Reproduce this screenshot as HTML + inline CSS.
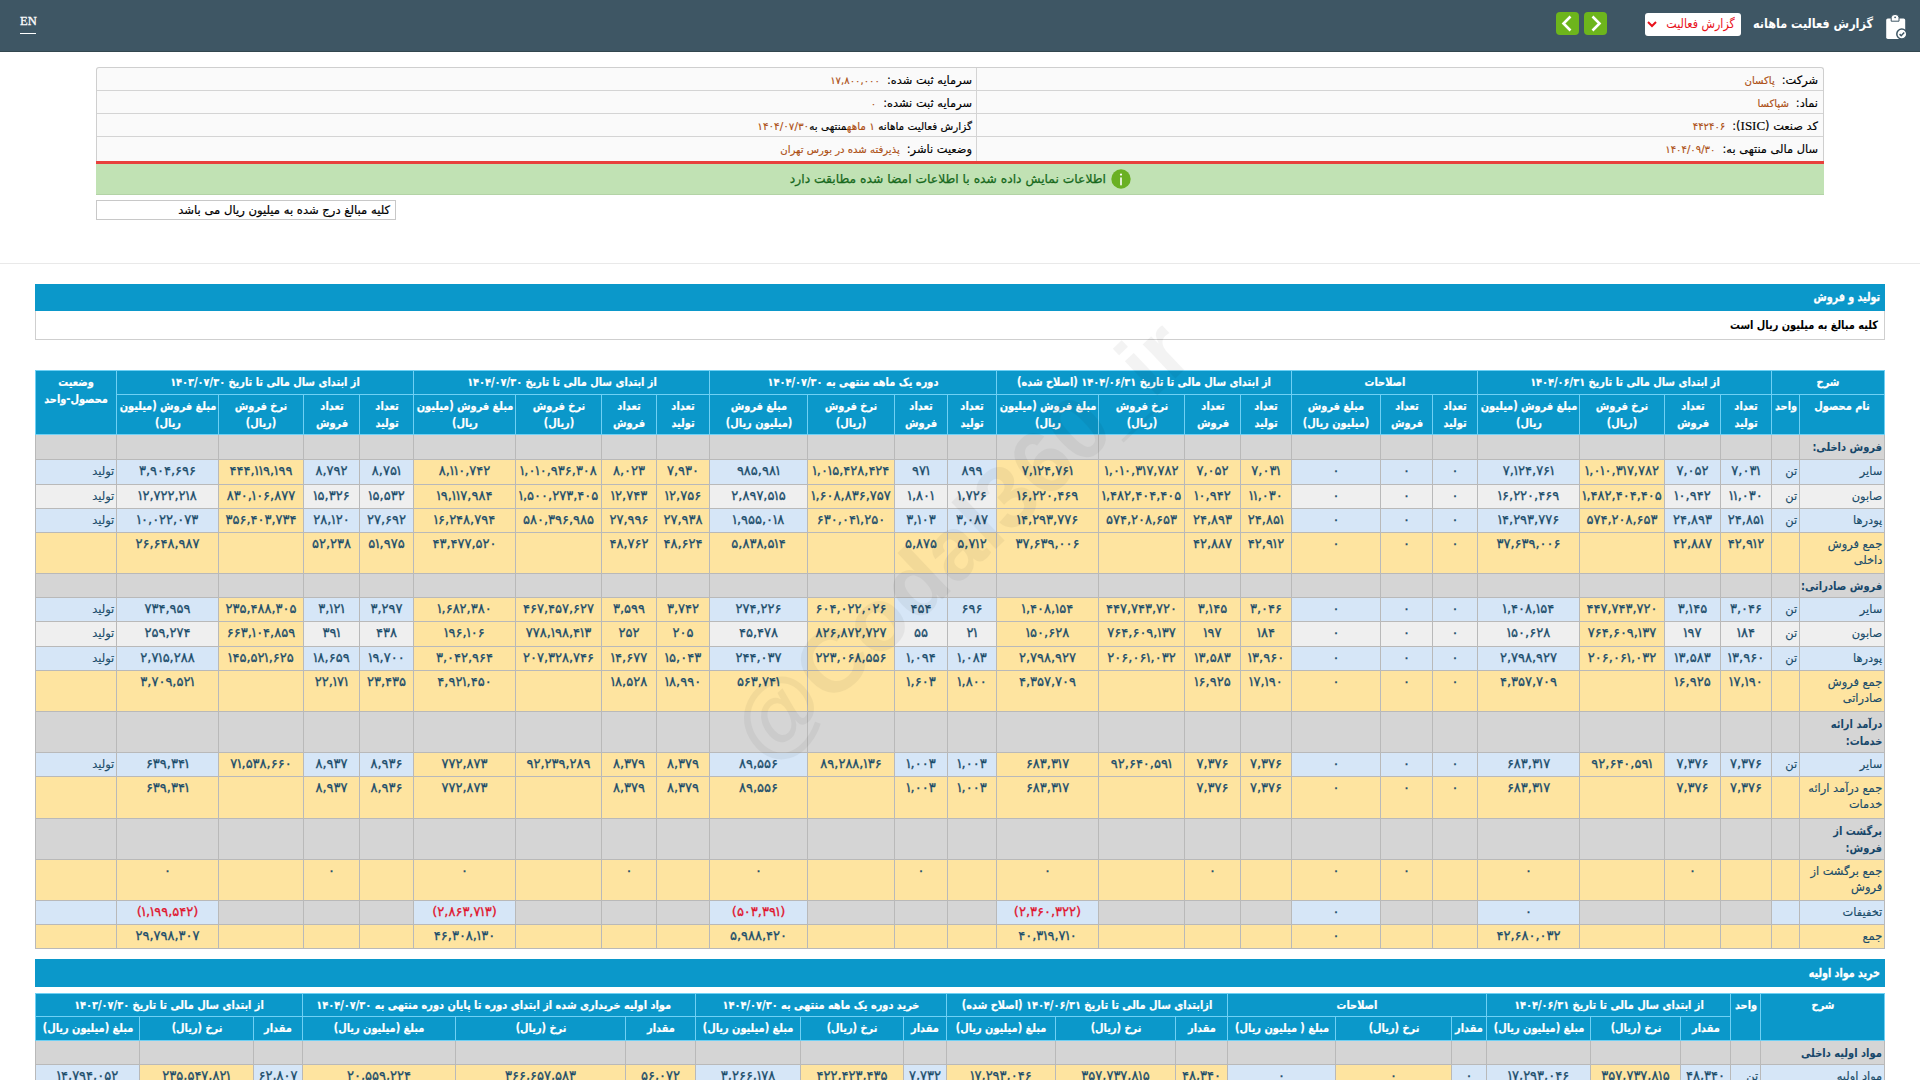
<!DOCTYPE html>
<html lang="fa" dir="rtl"><head><meta charset="utf-8"><title>گزارش فعالیت ماهانه</title>
<style>
*{box-sizing:border-box;margin:0;padding:0}
html,body{width:1920px;height:1080px;overflow:hidden;background:#fff}
body{font-family:"DejaVu Sans", "Liberation Sans", sans-serif;font-size:11.4px;color:#000;position:relative;direction:rtl}
.abs{position:absolute}
#top{position:absolute;left:0;top:0;width:1920px;height:52px;background:#3e5664;border-bottom:1px solid #33474f}
.c{position:absolute;overflow:hidden;white-space:nowrap;color:#1a4c6a}
.c .i{position:absolute;top:2.8px;line-height:16.4px;white-space:nowrap}
.c.h .i{top:3.2px;left:50%;width:400px;margin-left:-200px;text-align:center;color:#fff;font-weight:bold;font-size:11.4px;-webkit-text-stroke:.2px #fff;transform:scaleX(.86);transform-origin:50% 0}
.c.n .i{left:50%;width:400px;margin-left:-200px;text-align:center;font-size:13px;-webkit-text-stroke:.3px currentColor}
.c.n i{font-style:normal;margin:0 -1.4px}
.c.r .i{right:1.8px;text-align:right;font-size:11.4px;-webkit-text-stroke:.15px currentColor}
.c.sb .i{right:1.8px;top:4.4px;text-align:right;font-weight:bold;font-size:11.4px;color:#17476a;transform:scaleX(.87);transform-origin:100% 0}
.c.neg{color:#e0142d}
.bgl{position:absolute}
.bar{position:absolute;left:35px;width:1850px;background:#0b98ca;color:#fff;white-space:nowrap}
.bar .i{position:absolute;right:5px;top:0;font-weight:bold;-webkit-text-stroke:.3px #fff;font-size:11.8px;transform:scaleX(.81);transform-origin:100% 50%;white-space:nowrap}

.il{font-size:11.4px;line-height:22px;white-space:nowrap;color:#000;-webkit-text-stroke:.15px currentColor}
.il .v{color:#ad5015;margin-right:7px;font-size:10.1px}
.il .v0{color:#ad5015;font-size:10.1px}
#wm{position:absolute;left:560px;top:480px;width:800px;height:120px;line-height:120px;text-align:center;font-family:"Liberation Sans",sans-serif;font-weight:bold;font-size:89px;color:#000;opacity:.042;transform:rotate(-43.5deg);direction:ltr;white-space:nowrap;pointer-events:none}
</style></head>
<body>

<div id="top">
  <a class="abs" id="en" style="left:20px;top:12px;width:16px;height:22px;border-bottom:1px solid #fff;color:#fff;font-family:'Liberation Serif',serif;font-size:12.6px;-webkit-text-stroke:.3px #fff;line-height:19px;direction:ltr;text-align:center;white-space:nowrap">EN</a>
  <svg class="abs" style="left:1883px;top:12px" width="28" height="30" viewBox="0 0 28 30">
    <rect x="3.2" y="6.4" width="19" height="20.5" rx="1.6" fill="#fff"/>
    <path d="M8.2 9.2 V5.6 a3.9 3.2 0 0 1 7.8 0 V9.2 Z" fill="#fff" stroke="#3e5664" stroke-width="1"/>
    <circle cx="12.1" cy="5.3" r="0.9" fill="#3e5664"/>
    <circle cx="18.8" cy="22" r="5" fill="#fff" stroke="#3e5664" stroke-width="1.5"/>
    <path d="M16.6 22.1 l1.6 1.6 l3 -3.1" fill="none" stroke="#3e5664" stroke-width="1.5"/>
  </svg>
  <div class="abs" id="title" style="left:1673px;width:200px;top:11px;height:26px;line-height:26px;color:#fff;font-weight:bold;font-size:13px;text-align:right;white-space:nowrap;transform:scaleX(.865);transform-origin:100% 50%">گزارش فعالیت ماهانه</div>
  <div class="abs" id="sel" style="left:1645px;top:13px;width:96px;height:23px;background:#fff;border-radius:3px;color:#e8111a;white-space:nowrap"><div class="abs" style="right:6px;top:0;line-height:22px;font-size:12.6px;transform:scaleX(.88);transform-origin:100% 50%">گزارش فعالیت</div>
    <svg class="abs" style="left:2px;top:8px" width="10" height="7" viewBox="0 0 10 7"><path d="M1 1 L5 5 L9 1" fill="none" stroke="#e8111a" stroke-width="2"/></svg>
  </div>
  <div class="abs" style="left:1584px;top:12px;width:23px;height:23px;background:#6db51c;border-radius:4px">
    <svg width="23" height="23" viewBox="0 0 23 23"><path d="M8.5 4.5 L15.5 11.5 L8.5 18.5" fill="none" stroke="#fff" stroke-width="2.6"/></svg></div>
  <div class="abs" style="left:1556px;top:12px;width:23px;height:23px;background:#6db51c;border-radius:4px">
    <svg width="23" height="23" viewBox="0 0 23 23"><path d="M14.5 4.5 L7.5 11.5 L14.5 18.5" fill="none" stroke="#fff" stroke-width="2.6"/></svg></div>
</div>


<div class="abs" id="info" style="left:96px;top:67px;width:1728px;height:94px;background:#fafafa;border:1px solid #cfcfcf;border-bottom:none;border-radius:3px 3px 0 0"></div>
<div class="abs" style="left:97px;top:90px;width:1726px;height:1px;background:#d4d4d4"></div>
<div class="abs" style="left:97px;top:113px;width:1726px;height:1px;background:#d4d4d4"></div>
<div class="abs" style="left:97px;top:136px;width:1726px;height:1px;background:#d4d4d4"></div>
<div class="abs" style="left:976px;top:68px;width:1px;height:93px;background:#d4d4d4"></div>
<div class="abs" style="left:96px;top:161px;width:1728px;height:3px;background:#e8403c"></div>
<div class="abs" id="green" style="left:96px;top:164px;width:1728px;height:31px;background:#c1e2b4;border-bottom:1px solid #b3d3a6"></div>
<div class="abs il" style="top:69px;right:102px">شرکت:<span class="v">پاکسان</span></div>
<div class="abs il" style="top:92px;right:102px">نماد:<span class="v">شپاکسا</span></div>
<div class="abs il" style="top:115px;right:102px">کد صنعت (<span style="font-family:'Liberation Serif',serif;font-size:13px">ISIC</span>):<span class="v">۴۴۲۴۰۶</span></div>
<div class="abs il" style="top:138px;right:102px">سال مالی منتهی به:<span class="v">۱۴۰۴/۰۹/۳۰</span></div>
<div class="abs il" style="top:69px;right:948px">سرمایه ثبت شده:<span class="v">۱۷,۸۰۰,۰۰۰</span></div>
<div class="abs il" style="top:92px;right:948px">سرمایه ثبت نشده:<span class="v">۰</span></div>
<div class="abs il" style="top:115px;right:948px;font-size:10.45px">گزارش فعالیت ماهانه<span class="v0" style="font-size:10.45px"> ۱ ماهه</span>منتهی به<span class="v0" style="font-size:10.45px">۱۴۰۴/۰۷/۳۰</span></div>
<div class="abs il" style="top:138px;right:948px">وضعیت ناشر:<span class="v">پذیرفته شده در بورس تهران</span></div>
<div class="abs" id="gmsg" style="top:164px;right:814px;height:30px;line-height:30px;color:#17691c;font-size:12.3px;-webkit-text-stroke:.25px currentColor;white-space:nowrap">اطلاعات نمایش داده شده با اطلاعات امضا شده مطابقت دارد</div>
<svg class="abs" style="left:1111px;top:169px" width="20" height="20" viewBox="0 0 20 20"><circle cx="10" cy="10" r="9.7" fill="#6ab023"/><rect x="9.2" y="8.2" width="1.6" height="8.4" rx="0.8" fill="#fff"/><circle cx="10" cy="5.6" r="1.1" fill="#fff"/></svg>
<div class="abs" id="note" style="left:96px;top:200px;width:300px;height:20px;border:1px solid #c8c8c8;background:#fff;font-size:11.6px;line-height:19.4px;-webkit-text-stroke:.2px #000;text-align:right;padding-right:5px;white-space:nowrap">کلیه مبالغ درج شده به میلیون ریال می باشد</div>
<div class="abs" style="left:0;top:263px;width:1920px;height:1px;background:#e9e9e9"></div>
<div class="bar" style="top:284px;height:27px;line-height:27px"><div class="i">تولید و فروش</div></div>
<div class="abs" id="sub" style="left:35px;top:311px;width:1850px;height:29px;border:1px solid #cfcfcf;border-top:none;background:#fff;white-space:nowrap"><div class="abs" style="right:6px;top:0;line-height:29px;font-weight:bold;font-size:11.4px;transform:scaleX(.86);transform-origin:100% 50%">کلیه مبالغ به میلیون ریال است</div></div>
<div class="bar" style="top:959px;height:28px;line-height:28px"><div class="i">خرید مواد اولیه</div></div>

<div class="tbl" id="sales">
<div class="bgl" style="left:35px;top:370px;width:1850px;height:65px;background:#6fd0f4"></div>
<div class="bgl" style="left:35px;top:435px;width:1850px;height:514px;background:#b9b9b9"></div>
<div class="c h" style="left:1772px;top:371px;width:112px;height:23px;background:#0b98ca;"><div class="i">شرح</div></div>
<div class="c h" style="left:1478px;top:371px;width:293px;height:23px;background:#0b98ca;"><div class="i">از ابتدای سال مالی تا تاریخ ۱۴۰۴/۰۶/۳۱</div></div>
<div class="c h" style="left:1292px;top:371px;width:185px;height:23px;background:#0b98ca;"><div class="i">اصلاحات</div></div>
<div class="c h" style="left:997px;top:371px;width:294px;height:23px;background:#0b98ca;"><div class="i">از ابتدای سال مالی تا تاریخ ۱۴۰۴/۰۶/۳۱ (اصلاح شده)</div></div>
<div class="c h" style="left:710px;top:371px;width:286px;height:23px;background:#0b98ca;"><div class="i">دوره یک ماهه منتهی به ۱۴۰۴/۰۷/۳۰</div></div>
<div class="c h" style="left:414px;top:371px;width:295px;height:23px;background:#0b98ca;"><div class="i">از ابتدای سال مالی تا تاریخ ۱۴۰۴/۰۷/۳۰</div></div>
<div class="c h" style="left:117px;top:371px;width:296px;height:23px;background:#0b98ca;"><div class="i">از ابتدای سال مالی تا تاریخ ۱۴۰۳/۰۷/۳۰</div></div>
<div class="c h" style="left:36px;top:371px;width:80px;height:63px;background:#0b98ca;"><div class="i">وضعیت<br>محصول-واحد</div></div>
<div class="c h" style="left:1800px;top:395px;width:84px;height:39px;background:#0b98ca;"><div class="i">نام محصول</div></div>
<div class="c h" style="left:1772px;top:395px;width:27px;height:39px;background:#0b98ca;"><div class="i">واحد</div></div>
<div class="c h" style="left:1721px;top:395px;width:50px;height:39px;background:#0b98ca;"><div class="i">تعداد<br>تولید</div></div>
<div class="c h" style="left:1665px;top:395px;width:55px;height:39px;background:#0b98ca;"><div class="i">تعداد<br>فروش</div></div>
<div class="c h" style="left:1580px;top:395px;width:84px;height:39px;background:#0b98ca;"><div class="i">نرخ فروش<br>(ریال)</div></div>
<div class="c h" style="left:1478px;top:395px;width:101px;height:39px;background:#0b98ca;"><div class="i">مبلغ فروش (میلیون<br>ریال)</div></div>
<div class="c h" style="left:1433px;top:395px;width:44px;height:39px;background:#0b98ca;"><div class="i">تعداد<br>تولید</div></div>
<div class="c h" style="left:1381px;top:395px;width:51px;height:39px;background:#0b98ca;"><div class="i">تعداد<br>فروش</div></div>
<div class="c h" style="left:1292px;top:395px;width:88px;height:39px;background:#0b98ca;"><div class="i">مبلغ فروش<br>(میلیون ریال)</div></div>
<div class="c h" style="left:1241px;top:395px;width:50px;height:39px;background:#0b98ca;"><div class="i">تعداد<br>تولید</div></div>
<div class="c h" style="left:1185px;top:395px;width:55px;height:39px;background:#0b98ca;"><div class="i">تعداد<br>فروش</div></div>
<div class="c h" style="left:1099px;top:395px;width:85px;height:39px;background:#0b98ca;"><div class="i">نرخ فروش<br>(ریال)</div></div>
<div class="c h" style="left:997px;top:395px;width:101px;height:39px;background:#0b98ca;"><div class="i">مبلغ فروش (میلیون<br>ریال)</div></div>
<div class="c h" style="left:948px;top:395px;width:48px;height:39px;background:#0b98ca;"><div class="i">تعداد<br>تولید</div></div>
<div class="c h" style="left:895px;top:395px;width:52px;height:39px;background:#0b98ca;"><div class="i">تعداد<br>فروش</div></div>
<div class="c h" style="left:808px;top:395px;width:86px;height:39px;background:#0b98ca;"><div class="i">نرخ فروش<br>(ریال)</div></div>
<div class="c h" style="left:710px;top:395px;width:97px;height:39px;background:#0b98ca;"><div class="i">مبلغ فروش<br>(میلیون ریال)</div></div>
<div class="c h" style="left:657px;top:395px;width:52px;height:39px;background:#0b98ca;"><div class="i">تعداد<br>تولید</div></div>
<div class="c h" style="left:602px;top:395px;width:54px;height:39px;background:#0b98ca;"><div class="i">تعداد<br>فروش</div></div>
<div class="c h" style="left:516px;top:395px;width:85px;height:39px;background:#0b98ca;"><div class="i">نرخ فروش<br>(ریال)</div></div>
<div class="c h" style="left:414px;top:395px;width:101px;height:39px;background:#0b98ca;"><div class="i">مبلغ فروش (میلیون<br>ریال)</div></div>
<div class="c h" style="left:360px;top:395px;width:53px;height:39px;background:#0b98ca;"><div class="i">تعداد<br>تولید</div></div>
<div class="c h" style="left:304px;top:395px;width:55px;height:39px;background:#0b98ca;"><div class="i">تعداد<br>فروش</div></div>
<div class="c h" style="left:219px;top:395px;width:84px;height:39px;background:#0b98ca;"><div class="i">نرخ فروش<br>(ریال)</div></div>
<div class="c h" style="left:117px;top:395px;width:101px;height:39px;background:#0b98ca;"><div class="i">مبلغ فروش (میلیون<br>ریال)</div></div>
<div class="c sb" style="left:1800px;top:435px;width:84px;height:24px;background:#d5d5d5;"><div class="i">فروش داخلی:</div></div>
<div class="c " style="left:1772px;top:435px;width:27px;height:24px;background:#d5d5d5;"></div>
<div class="c " style="left:1721px;top:435px;width:50px;height:24px;background:#d5d5d5;"></div>
<div class="c " style="left:1665px;top:435px;width:55px;height:24px;background:#d5d5d5;"></div>
<div class="c " style="left:1580px;top:435px;width:84px;height:24px;background:#d5d5d5;"></div>
<div class="c " style="left:1478px;top:435px;width:101px;height:24px;background:#d5d5d5;"></div>
<div class="c " style="left:1433px;top:435px;width:44px;height:24px;background:#d5d5d5;"></div>
<div class="c " style="left:1381px;top:435px;width:51px;height:24px;background:#d5d5d5;"></div>
<div class="c " style="left:1292px;top:435px;width:88px;height:24px;background:#d5d5d5;"></div>
<div class="c " style="left:1241px;top:435px;width:50px;height:24px;background:#d5d5d5;"></div>
<div class="c " style="left:1185px;top:435px;width:55px;height:24px;background:#d5d5d5;"></div>
<div class="c " style="left:1099px;top:435px;width:85px;height:24px;background:#d5d5d5;"></div>
<div class="c " style="left:997px;top:435px;width:101px;height:24px;background:#d5d5d5;"></div>
<div class="c " style="left:948px;top:435px;width:48px;height:24px;background:#d5d5d5;"></div>
<div class="c " style="left:895px;top:435px;width:52px;height:24px;background:#d5d5d5;"></div>
<div class="c " style="left:808px;top:435px;width:86px;height:24px;background:#d5d5d5;"></div>
<div class="c " style="left:710px;top:435px;width:97px;height:24px;background:#d5d5d5;"></div>
<div class="c " style="left:657px;top:435px;width:52px;height:24px;background:#d5d5d5;"></div>
<div class="c " style="left:602px;top:435px;width:54px;height:24px;background:#d5d5d5;"></div>
<div class="c " style="left:516px;top:435px;width:85px;height:24px;background:#d5d5d5;"></div>
<div class="c " style="left:414px;top:435px;width:101px;height:24px;background:#d5d5d5;"></div>
<div class="c " style="left:360px;top:435px;width:53px;height:24px;background:#d5d5d5;"></div>
<div class="c " style="left:304px;top:435px;width:55px;height:24px;background:#d5d5d5;"></div>
<div class="c " style="left:219px;top:435px;width:84px;height:24px;background:#d5d5d5;"></div>
<div class="c " style="left:117px;top:435px;width:101px;height:24px;background:#d5d5d5;"></div>
<div class="c " style="left:36px;top:435px;width:80px;height:24px;background:#d5d5d5;"></div>
<div class="c r" style="left:1800px;top:460px;width:84px;height:24px;background:#d6e6f7;"><div class="i">سایر</div></div>
<div class="c r" style="left:1772px;top:460px;width:27px;height:24px;background:#d6e6f7;"><div class="i">تن</div></div>
<div class="c n" style="left:1721px;top:460px;width:50px;height:24px;background:#d6e6f7;"><div class="i">۷,۰۳<i>۱</i></div></div>
<div class="c n" style="left:1665px;top:460px;width:55px;height:24px;background:#d6e6f7;"><div class="i">۷,۰۵۲</div></div>
<div class="c n" style="left:1580px;top:460px;width:84px;height:24px;background:#fee4a0;"><div class="i"><i>۱</i>,۰<i>۱</i>۰,۳<i>۱</i>۷,۷۸۲</div></div>
<div class="c n" style="left:1478px;top:460px;width:101px;height:24px;background:#d6e6f7;"><div class="i">۷,<i>۱</i>۲۴,۷۶<i>۱</i></div></div>
<div class="c n" style="left:1433px;top:460px;width:44px;height:24px;background:#d6e6f7;"><div class="i">۰</div></div>
<div class="c n" style="left:1381px;top:460px;width:51px;height:24px;background:#d6e6f7;"><div class="i">۰</div></div>
<div class="c n" style="left:1292px;top:460px;width:88px;height:24px;background:#d6e6f7;"><div class="i">۰</div></div>
<div class="c n" style="left:1241px;top:460px;width:50px;height:24px;background:#fee4a0;"><div class="i">۷,۰۳<i>۱</i></div></div>
<div class="c n" style="left:1185px;top:460px;width:55px;height:24px;background:#fee4a0;"><div class="i">۷,۰۵۲</div></div>
<div class="c n" style="left:1099px;top:460px;width:85px;height:24px;background:#fee4a0;"><div class="i"><i>۱</i>,۰<i>۱</i>۰,۳<i>۱</i>۷,۷۸۲</div></div>
<div class="c n" style="left:997px;top:460px;width:101px;height:24px;background:#fee4a0;"><div class="i">۷,<i>۱</i>۲۴,۷۶<i>۱</i></div></div>
<div class="c n" style="left:948px;top:460px;width:48px;height:24px;background:#d6e6f7;"><div class="i">۸۹۹</div></div>
<div class="c n" style="left:895px;top:460px;width:52px;height:24px;background:#d6e6f7;"><div class="i">۹۷<i>۱</i></div></div>
<div class="c n" style="left:808px;top:460px;width:86px;height:24px;background:#fee4a0;"><div class="i"><i>۱</i>,۰<i>۱</i>۵,۴۲۸,۴۲۴</div></div>
<div class="c n" style="left:710px;top:460px;width:97px;height:24px;background:#d6e6f7;"><div class="i">۹۸۵,۹۸<i>۱</i></div></div>
<div class="c n" style="left:657px;top:460px;width:52px;height:24px;background:#fee4a0;"><div class="i">۷,۹۳۰</div></div>
<div class="c n" style="left:602px;top:460px;width:54px;height:24px;background:#fee4a0;"><div class="i">۸,۰۲۳</div></div>
<div class="c n" style="left:516px;top:460px;width:85px;height:24px;background:#fee4a0;"><div class="i"><i>۱</i>,۰<i>۱</i>۰,۹۳۶,۳۰۸</div></div>
<div class="c n" style="left:414px;top:460px;width:101px;height:24px;background:#fee4a0;"><div class="i">۸,<i>۱</i><i>۱</i>۰,۷۴۲</div></div>
<div class="c n" style="left:360px;top:460px;width:53px;height:24px;background:#d6e6f7;"><div class="i">۸,۷۵<i>۱</i></div></div>
<div class="c n" style="left:304px;top:460px;width:55px;height:24px;background:#d6e6f7;"><div class="i">۸,۷۹۲</div></div>
<div class="c n" style="left:219px;top:460px;width:84px;height:24px;background:#fee4a0;"><div class="i">۴۴۴,<i>۱</i><i>۱</i>۹,<i>۱</i>۹۹</div></div>
<div class="c n" style="left:117px;top:460px;width:101px;height:24px;background:#d6e6f7;"><div class="i">۳,۹۰۴,۶۹۶</div></div>
<div class="c r" style="left:36px;top:460px;width:80px;height:24px;background:#d6e6f7;"><div class="i">تولید</div></div>
<div class="c r" style="left:1800px;top:485px;width:84px;height:23px;background:#efefef;"><div class="i">صابون</div></div>
<div class="c r" style="left:1772px;top:485px;width:27px;height:23px;background:#efefef;"><div class="i">تن</div></div>
<div class="c n" style="left:1721px;top:485px;width:50px;height:23px;background:#efefef;"><div class="i"><i>۱</i><i>۱</i>,۰۳۰</div></div>
<div class="c n" style="left:1665px;top:485px;width:55px;height:23px;background:#efefef;"><div class="i"><i>۱</i>۰,۹۴۲</div></div>
<div class="c n" style="left:1580px;top:485px;width:84px;height:23px;background:#fee4a0;"><div class="i"><i>۱</i>,۴۸۲,۴۰۴,۴۰۵</div></div>
<div class="c n" style="left:1478px;top:485px;width:101px;height:23px;background:#efefef;"><div class="i"><i>۱</i>۶,۲۲۰,۴۶۹</div></div>
<div class="c n" style="left:1433px;top:485px;width:44px;height:23px;background:#efefef;"><div class="i">۰</div></div>
<div class="c n" style="left:1381px;top:485px;width:51px;height:23px;background:#efefef;"><div class="i">۰</div></div>
<div class="c n" style="left:1292px;top:485px;width:88px;height:23px;background:#efefef;"><div class="i">۰</div></div>
<div class="c n" style="left:1241px;top:485px;width:50px;height:23px;background:#fee4a0;"><div class="i"><i>۱</i><i>۱</i>,۰۳۰</div></div>
<div class="c n" style="left:1185px;top:485px;width:55px;height:23px;background:#fee4a0;"><div class="i"><i>۱</i>۰,۹۴۲</div></div>
<div class="c n" style="left:1099px;top:485px;width:85px;height:23px;background:#fee4a0;"><div class="i"><i>۱</i>,۴۸۲,۴۰۴,۴۰۵</div></div>
<div class="c n" style="left:997px;top:485px;width:101px;height:23px;background:#fee4a0;"><div class="i"><i>۱</i>۶,۲۲۰,۴۶۹</div></div>
<div class="c n" style="left:948px;top:485px;width:48px;height:23px;background:#efefef;"><div class="i"><i>۱</i>,۷۲۶</div></div>
<div class="c n" style="left:895px;top:485px;width:52px;height:23px;background:#efefef;"><div class="i"><i>۱</i>,۸۰<i>۱</i></div></div>
<div class="c n" style="left:808px;top:485px;width:86px;height:23px;background:#fee4a0;"><div class="i"><i>۱</i>,۶۰۸,۸۳۶,۷۵۷</div></div>
<div class="c n" style="left:710px;top:485px;width:97px;height:23px;background:#efefef;"><div class="i">۲,۸۹۷,۵<i>۱</i>۵</div></div>
<div class="c n" style="left:657px;top:485px;width:52px;height:23px;background:#fee4a0;"><div class="i"><i>۱</i>۲,۷۵۶</div></div>
<div class="c n" style="left:602px;top:485px;width:54px;height:23px;background:#fee4a0;"><div class="i"><i>۱</i>۲,۷۴۳</div></div>
<div class="c n" style="left:516px;top:485px;width:85px;height:23px;background:#fee4a0;"><div class="i"><i>۱</i>,۵۰۰,۲۷۳,۴۰۵</div></div>
<div class="c n" style="left:414px;top:485px;width:101px;height:23px;background:#fee4a0;"><div class="i"><i>۱</i>۹,<i>۱</i><i>۱</i>۷,۹۸۴</div></div>
<div class="c n" style="left:360px;top:485px;width:53px;height:23px;background:#efefef;"><div class="i"><i>۱</i>۵,۵۳۲</div></div>
<div class="c n" style="left:304px;top:485px;width:55px;height:23px;background:#efefef;"><div class="i"><i>۱</i>۵,۳۲۶</div></div>
<div class="c n" style="left:219px;top:485px;width:84px;height:23px;background:#fee4a0;"><div class="i">۸۳۰,<i>۱</i>۰۶,۸۷۷</div></div>
<div class="c n" style="left:117px;top:485px;width:101px;height:23px;background:#efefef;"><div class="i"><i>۱</i>۲,۷۲۲,۲<i>۱</i>۸</div></div>
<div class="c r" style="left:36px;top:485px;width:80px;height:23px;background:#efefef;"><div class="i">تولید</div></div>
<div class="c r" style="left:1800px;top:509px;width:84px;height:23px;background:#d6e6f7;"><div class="i">پودرها</div></div>
<div class="c r" style="left:1772px;top:509px;width:27px;height:23px;background:#d6e6f7;"><div class="i">تن</div></div>
<div class="c n" style="left:1721px;top:509px;width:50px;height:23px;background:#d6e6f7;"><div class="i">۲۴,۸۵<i>۱</i></div></div>
<div class="c n" style="left:1665px;top:509px;width:55px;height:23px;background:#d6e6f7;"><div class="i">۲۴,۸۹۳</div></div>
<div class="c n" style="left:1580px;top:509px;width:84px;height:23px;background:#fee4a0;"><div class="i">۵۷۴,۲۰۸,۶۵۳</div></div>
<div class="c n" style="left:1478px;top:509px;width:101px;height:23px;background:#d6e6f7;"><div class="i"><i>۱</i>۴,۲۹۳,۷۷۶</div></div>
<div class="c n" style="left:1433px;top:509px;width:44px;height:23px;background:#d6e6f7;"><div class="i">۰</div></div>
<div class="c n" style="left:1381px;top:509px;width:51px;height:23px;background:#d6e6f7;"><div class="i">۰</div></div>
<div class="c n" style="left:1292px;top:509px;width:88px;height:23px;background:#d6e6f7;"><div class="i">۰</div></div>
<div class="c n" style="left:1241px;top:509px;width:50px;height:23px;background:#fee4a0;"><div class="i">۲۴,۸۵<i>۱</i></div></div>
<div class="c n" style="left:1185px;top:509px;width:55px;height:23px;background:#fee4a0;"><div class="i">۲۴,۸۹۳</div></div>
<div class="c n" style="left:1099px;top:509px;width:85px;height:23px;background:#fee4a0;"><div class="i">۵۷۴,۲۰۸,۶۵۳</div></div>
<div class="c n" style="left:997px;top:509px;width:101px;height:23px;background:#fee4a0;"><div class="i"><i>۱</i>۴,۲۹۳,۷۷۶</div></div>
<div class="c n" style="left:948px;top:509px;width:48px;height:23px;background:#d6e6f7;"><div class="i">۳,۰۸۷</div></div>
<div class="c n" style="left:895px;top:509px;width:52px;height:23px;background:#d6e6f7;"><div class="i">۳,<i>۱</i>۰۳</div></div>
<div class="c n" style="left:808px;top:509px;width:86px;height:23px;background:#fee4a0;"><div class="i">۶۳۰,۰۴<i>۱</i>,۲۵۰</div></div>
<div class="c n" style="left:710px;top:509px;width:97px;height:23px;background:#d6e6f7;"><div class="i"><i>۱</i>,۹۵۵,۰<i>۱</i>۸</div></div>
<div class="c n" style="left:657px;top:509px;width:52px;height:23px;background:#fee4a0;"><div class="i">۲۷,۹۳۸</div></div>
<div class="c n" style="left:602px;top:509px;width:54px;height:23px;background:#fee4a0;"><div class="i">۲۷,۹۹۶</div></div>
<div class="c n" style="left:516px;top:509px;width:85px;height:23px;background:#fee4a0;"><div class="i">۵۸۰,۳۹۶,۹۸۵</div></div>
<div class="c n" style="left:414px;top:509px;width:101px;height:23px;background:#fee4a0;"><div class="i"><i>۱</i>۶,۲۴۸,۷۹۴</div></div>
<div class="c n" style="left:360px;top:509px;width:53px;height:23px;background:#d6e6f7;"><div class="i">۲۷,۶۹۲</div></div>
<div class="c n" style="left:304px;top:509px;width:55px;height:23px;background:#d6e6f7;"><div class="i">۲۸,<i>۱</i>۲۰</div></div>
<div class="c n" style="left:219px;top:509px;width:84px;height:23px;background:#fee4a0;"><div class="i">۳۵۶,۴۰۳,۷۳۴</div></div>
<div class="c n" style="left:117px;top:509px;width:101px;height:23px;background:#d6e6f7;"><div class="i"><i>۱</i>۰,۰۲۲,۰۷۳</div></div>
<div class="c r" style="left:36px;top:509px;width:80px;height:23px;background:#d6e6f7;"><div class="i">تولید</div></div>
<div class="c r" style="left:1800px;top:533px;width:84px;height:40px;background:#fee4a0;"><div class="i">جمع فروش<br>داخلی</div></div>
<div class="c r" style="left:1772px;top:533px;width:27px;height:40px;background:#fee4a0;"></div>
<div class="c n" style="left:1721px;top:533px;width:50px;height:40px;background:#fee4a0;"><div class="i">۴۲,۹<i>۱</i>۲</div></div>
<div class="c n" style="left:1665px;top:533px;width:55px;height:40px;background:#fee4a0;"><div class="i">۴۲,۸۸۷</div></div>
<div class="c n" style="left:1580px;top:533px;width:84px;height:40px;background:#fee4a0;"></div>
<div class="c n" style="left:1478px;top:533px;width:101px;height:40px;background:#fee4a0;"><div class="i">۳۷,۶۳۹,۰۰۶</div></div>
<div class="c n" style="left:1433px;top:533px;width:44px;height:40px;background:#fee4a0;"><div class="i">۰</div></div>
<div class="c n" style="left:1381px;top:533px;width:51px;height:40px;background:#fee4a0;"><div class="i">۰</div></div>
<div class="c n" style="left:1292px;top:533px;width:88px;height:40px;background:#fee4a0;"><div class="i">۰</div></div>
<div class="c n" style="left:1241px;top:533px;width:50px;height:40px;background:#fee4a0;"><div class="i">۴۲,۹<i>۱</i>۲</div></div>
<div class="c n" style="left:1185px;top:533px;width:55px;height:40px;background:#fee4a0;"><div class="i">۴۲,۸۸۷</div></div>
<div class="c n" style="left:1099px;top:533px;width:85px;height:40px;background:#fee4a0;"></div>
<div class="c n" style="left:997px;top:533px;width:101px;height:40px;background:#fee4a0;"><div class="i">۳۷,۶۳۹,۰۰۶</div></div>
<div class="c n" style="left:948px;top:533px;width:48px;height:40px;background:#fee4a0;"><div class="i">۵,۷<i>۱</i>۲</div></div>
<div class="c n" style="left:895px;top:533px;width:52px;height:40px;background:#fee4a0;"><div class="i">۵,۸۷۵</div></div>
<div class="c n" style="left:808px;top:533px;width:86px;height:40px;background:#fee4a0;"></div>
<div class="c n" style="left:710px;top:533px;width:97px;height:40px;background:#fee4a0;"><div class="i">۵,۸۳۸,۵<i>۱</i>۴</div></div>
<div class="c n" style="left:657px;top:533px;width:52px;height:40px;background:#fee4a0;"><div class="i">۴۸,۶۲۴</div></div>
<div class="c n" style="left:602px;top:533px;width:54px;height:40px;background:#fee4a0;"><div class="i">۴۸,۷۶۲</div></div>
<div class="c n" style="left:516px;top:533px;width:85px;height:40px;background:#fee4a0;"></div>
<div class="c n" style="left:414px;top:533px;width:101px;height:40px;background:#fee4a0;"><div class="i">۴۳,۴۷۷,۵۲۰</div></div>
<div class="c n" style="left:360px;top:533px;width:53px;height:40px;background:#fee4a0;"><div class="i">۵<i>۱</i>,۹۷۵</div></div>
<div class="c n" style="left:304px;top:533px;width:55px;height:40px;background:#fee4a0;"><div class="i">۵۲,۲۳۸</div></div>
<div class="c n" style="left:219px;top:533px;width:84px;height:40px;background:#fee4a0;"></div>
<div class="c n" style="left:117px;top:533px;width:101px;height:40px;background:#fee4a0;"><div class="i">۲۶,۶۴۸,۹۸۷</div></div>
<div class="c r" style="left:36px;top:533px;width:80px;height:40px;background:#fee4a0;"></div>
<div class="c sb" style="left:1800px;top:574px;width:84px;height:23px;background:#d5d5d5;"><div class="i">فروش صادراتی:</div></div>
<div class="c " style="left:1772px;top:574px;width:27px;height:23px;background:#d5d5d5;"></div>
<div class="c " style="left:1721px;top:574px;width:50px;height:23px;background:#d5d5d5;"></div>
<div class="c " style="left:1665px;top:574px;width:55px;height:23px;background:#d5d5d5;"></div>
<div class="c " style="left:1580px;top:574px;width:84px;height:23px;background:#d5d5d5;"></div>
<div class="c " style="left:1478px;top:574px;width:101px;height:23px;background:#d5d5d5;"></div>
<div class="c " style="left:1433px;top:574px;width:44px;height:23px;background:#d5d5d5;"></div>
<div class="c " style="left:1381px;top:574px;width:51px;height:23px;background:#d5d5d5;"></div>
<div class="c " style="left:1292px;top:574px;width:88px;height:23px;background:#d5d5d5;"></div>
<div class="c " style="left:1241px;top:574px;width:50px;height:23px;background:#d5d5d5;"></div>
<div class="c " style="left:1185px;top:574px;width:55px;height:23px;background:#d5d5d5;"></div>
<div class="c " style="left:1099px;top:574px;width:85px;height:23px;background:#d5d5d5;"></div>
<div class="c " style="left:997px;top:574px;width:101px;height:23px;background:#d5d5d5;"></div>
<div class="c " style="left:948px;top:574px;width:48px;height:23px;background:#d5d5d5;"></div>
<div class="c " style="left:895px;top:574px;width:52px;height:23px;background:#d5d5d5;"></div>
<div class="c " style="left:808px;top:574px;width:86px;height:23px;background:#d5d5d5;"></div>
<div class="c " style="left:710px;top:574px;width:97px;height:23px;background:#d5d5d5;"></div>
<div class="c " style="left:657px;top:574px;width:52px;height:23px;background:#d5d5d5;"></div>
<div class="c " style="left:602px;top:574px;width:54px;height:23px;background:#d5d5d5;"></div>
<div class="c " style="left:516px;top:574px;width:85px;height:23px;background:#d5d5d5;"></div>
<div class="c " style="left:414px;top:574px;width:101px;height:23px;background:#d5d5d5;"></div>
<div class="c " style="left:360px;top:574px;width:53px;height:23px;background:#d5d5d5;"></div>
<div class="c " style="left:304px;top:574px;width:55px;height:23px;background:#d5d5d5;"></div>
<div class="c " style="left:219px;top:574px;width:84px;height:23px;background:#d5d5d5;"></div>
<div class="c " style="left:117px;top:574px;width:101px;height:23px;background:#d5d5d5;"></div>
<div class="c " style="left:36px;top:574px;width:80px;height:23px;background:#d5d5d5;"></div>
<div class="c r" style="left:1800px;top:598px;width:84px;height:23px;background:#d6e6f7;"><div class="i">سایر</div></div>
<div class="c r" style="left:1772px;top:598px;width:27px;height:23px;background:#d6e6f7;"><div class="i">تن</div></div>
<div class="c n" style="left:1721px;top:598px;width:50px;height:23px;background:#d6e6f7;"><div class="i">۳,۰۴۶</div></div>
<div class="c n" style="left:1665px;top:598px;width:55px;height:23px;background:#d6e6f7;"><div class="i">۳,<i>۱</i>۴۵</div></div>
<div class="c n" style="left:1580px;top:598px;width:84px;height:23px;background:#fee4a0;"><div class="i">۴۴۷,۷۴۳,۷۲۰</div></div>
<div class="c n" style="left:1478px;top:598px;width:101px;height:23px;background:#d6e6f7;"><div class="i"><i>۱</i>,۴۰۸,<i>۱</i>۵۴</div></div>
<div class="c n" style="left:1433px;top:598px;width:44px;height:23px;background:#d6e6f7;"><div class="i">۰</div></div>
<div class="c n" style="left:1381px;top:598px;width:51px;height:23px;background:#d6e6f7;"><div class="i">۰</div></div>
<div class="c n" style="left:1292px;top:598px;width:88px;height:23px;background:#d6e6f7;"><div class="i">۰</div></div>
<div class="c n" style="left:1241px;top:598px;width:50px;height:23px;background:#fee4a0;"><div class="i">۳,۰۴۶</div></div>
<div class="c n" style="left:1185px;top:598px;width:55px;height:23px;background:#fee4a0;"><div class="i">۳,<i>۱</i>۴۵</div></div>
<div class="c n" style="left:1099px;top:598px;width:85px;height:23px;background:#fee4a0;"><div class="i">۴۴۷,۷۴۳,۷۲۰</div></div>
<div class="c n" style="left:997px;top:598px;width:101px;height:23px;background:#fee4a0;"><div class="i"><i>۱</i>,۴۰۸,<i>۱</i>۵۴</div></div>
<div class="c n" style="left:948px;top:598px;width:48px;height:23px;background:#d6e6f7;"><div class="i">۶۹۶</div></div>
<div class="c n" style="left:895px;top:598px;width:52px;height:23px;background:#d6e6f7;"><div class="i">۴۵۴</div></div>
<div class="c n" style="left:808px;top:598px;width:86px;height:23px;background:#fee4a0;"><div class="i">۶۰۴,۰۲۲,۰۲۶</div></div>
<div class="c n" style="left:710px;top:598px;width:97px;height:23px;background:#d6e6f7;"><div class="i">۲۷۴,۲۲۶</div></div>
<div class="c n" style="left:657px;top:598px;width:52px;height:23px;background:#fee4a0;"><div class="i">۳,۷۴۲</div></div>
<div class="c n" style="left:602px;top:598px;width:54px;height:23px;background:#fee4a0;"><div class="i">۳,۵۹۹</div></div>
<div class="c n" style="left:516px;top:598px;width:85px;height:23px;background:#fee4a0;"><div class="i">۴۶۷,۴۵۷,۶۲۷</div></div>
<div class="c n" style="left:414px;top:598px;width:101px;height:23px;background:#fee4a0;"><div class="i"><i>۱</i>,۶۸۲,۳۸۰</div></div>
<div class="c n" style="left:360px;top:598px;width:53px;height:23px;background:#d6e6f7;"><div class="i">۳,۲۹۷</div></div>
<div class="c n" style="left:304px;top:598px;width:55px;height:23px;background:#d6e6f7;"><div class="i">۳,<i>۱</i>۲<i>۱</i></div></div>
<div class="c n" style="left:219px;top:598px;width:84px;height:23px;background:#fee4a0;"><div class="i">۲۳۵,۴۸۸,۳۰۵</div></div>
<div class="c n" style="left:117px;top:598px;width:101px;height:23px;background:#d6e6f7;"><div class="i">۷۳۴,۹۵۹</div></div>
<div class="c r" style="left:36px;top:598px;width:80px;height:23px;background:#d6e6f7;"><div class="i">تولید</div></div>
<div class="c r" style="left:1800px;top:622px;width:84px;height:24px;background:#efefef;"><div class="i">صابون</div></div>
<div class="c r" style="left:1772px;top:622px;width:27px;height:24px;background:#efefef;"><div class="i">تن</div></div>
<div class="c n" style="left:1721px;top:622px;width:50px;height:24px;background:#efefef;"><div class="i"><i>۱</i>۸۴</div></div>
<div class="c n" style="left:1665px;top:622px;width:55px;height:24px;background:#efefef;"><div class="i"><i>۱</i>۹۷</div></div>
<div class="c n" style="left:1580px;top:622px;width:84px;height:24px;background:#fee4a0;"><div class="i">۷۶۴,۶۰۹,<i>۱</i>۳۷</div></div>
<div class="c n" style="left:1478px;top:622px;width:101px;height:24px;background:#efefef;"><div class="i"><i>۱</i>۵۰,۶۲۸</div></div>
<div class="c n" style="left:1433px;top:622px;width:44px;height:24px;background:#efefef;"><div class="i">۰</div></div>
<div class="c n" style="left:1381px;top:622px;width:51px;height:24px;background:#efefef;"><div class="i">۰</div></div>
<div class="c n" style="left:1292px;top:622px;width:88px;height:24px;background:#efefef;"><div class="i">۰</div></div>
<div class="c n" style="left:1241px;top:622px;width:50px;height:24px;background:#fee4a0;"><div class="i"><i>۱</i>۸۴</div></div>
<div class="c n" style="left:1185px;top:622px;width:55px;height:24px;background:#fee4a0;"><div class="i"><i>۱</i>۹۷</div></div>
<div class="c n" style="left:1099px;top:622px;width:85px;height:24px;background:#fee4a0;"><div class="i">۷۶۴,۶۰۹,<i>۱</i>۳۷</div></div>
<div class="c n" style="left:997px;top:622px;width:101px;height:24px;background:#fee4a0;"><div class="i"><i>۱</i>۵۰,۶۲۸</div></div>
<div class="c n" style="left:948px;top:622px;width:48px;height:24px;background:#efefef;"><div class="i">۲<i>۱</i></div></div>
<div class="c n" style="left:895px;top:622px;width:52px;height:24px;background:#efefef;"><div class="i">۵۵</div></div>
<div class="c n" style="left:808px;top:622px;width:86px;height:24px;background:#fee4a0;"><div class="i">۸۲۶,۸۷۲,۷۲۷</div></div>
<div class="c n" style="left:710px;top:622px;width:97px;height:24px;background:#efefef;"><div class="i">۴۵,۴۷۸</div></div>
<div class="c n" style="left:657px;top:622px;width:52px;height:24px;background:#fee4a0;"><div class="i">۲۰۵</div></div>
<div class="c n" style="left:602px;top:622px;width:54px;height:24px;background:#fee4a0;"><div class="i">۲۵۲</div></div>
<div class="c n" style="left:516px;top:622px;width:85px;height:24px;background:#fee4a0;"><div class="i">۷۷۸,<i>۱</i>۹۸,۴<i>۱</i>۳</div></div>
<div class="c n" style="left:414px;top:622px;width:101px;height:24px;background:#fee4a0;"><div class="i"><i>۱</i>۹۶,<i>۱</i>۰۶</div></div>
<div class="c n" style="left:360px;top:622px;width:53px;height:24px;background:#efefef;"><div class="i">۴۳۸</div></div>
<div class="c n" style="left:304px;top:622px;width:55px;height:24px;background:#efefef;"><div class="i">۳۹<i>۱</i></div></div>
<div class="c n" style="left:219px;top:622px;width:84px;height:24px;background:#fee4a0;"><div class="i">۶۶۳,<i>۱</i>۰۴,۸۵۹</div></div>
<div class="c n" style="left:117px;top:622px;width:101px;height:24px;background:#efefef;"><div class="i">۲۵۹,۲۷۴</div></div>
<div class="c r" style="left:36px;top:622px;width:80px;height:24px;background:#efefef;"><div class="i">تولید</div></div>
<div class="c r" style="left:1800px;top:647px;width:84px;height:23px;background:#d6e6f7;"><div class="i">پودرها</div></div>
<div class="c r" style="left:1772px;top:647px;width:27px;height:23px;background:#d6e6f7;"><div class="i">تن</div></div>
<div class="c n" style="left:1721px;top:647px;width:50px;height:23px;background:#d6e6f7;"><div class="i"><i>۱</i>۳,۹۶۰</div></div>
<div class="c n" style="left:1665px;top:647px;width:55px;height:23px;background:#d6e6f7;"><div class="i"><i>۱</i>۳,۵۸۳</div></div>
<div class="c n" style="left:1580px;top:647px;width:84px;height:23px;background:#fee4a0;"><div class="i">۲۰۶,۰۶<i>۱</i>,۰۳۲</div></div>
<div class="c n" style="left:1478px;top:647px;width:101px;height:23px;background:#d6e6f7;"><div class="i">۲,۷۹۸,۹۲۷</div></div>
<div class="c n" style="left:1433px;top:647px;width:44px;height:23px;background:#d6e6f7;"><div class="i">۰</div></div>
<div class="c n" style="left:1381px;top:647px;width:51px;height:23px;background:#d6e6f7;"><div class="i">۰</div></div>
<div class="c n" style="left:1292px;top:647px;width:88px;height:23px;background:#d6e6f7;"><div class="i">۰</div></div>
<div class="c n" style="left:1241px;top:647px;width:50px;height:23px;background:#fee4a0;"><div class="i"><i>۱</i>۳,۹۶۰</div></div>
<div class="c n" style="left:1185px;top:647px;width:55px;height:23px;background:#fee4a0;"><div class="i"><i>۱</i>۳,۵۸۳</div></div>
<div class="c n" style="left:1099px;top:647px;width:85px;height:23px;background:#fee4a0;"><div class="i">۲۰۶,۰۶<i>۱</i>,۰۳۲</div></div>
<div class="c n" style="left:997px;top:647px;width:101px;height:23px;background:#fee4a0;"><div class="i">۲,۷۹۸,۹۲۷</div></div>
<div class="c n" style="left:948px;top:647px;width:48px;height:23px;background:#d6e6f7;"><div class="i"><i>۱</i>,۰۸۳</div></div>
<div class="c n" style="left:895px;top:647px;width:52px;height:23px;background:#d6e6f7;"><div class="i"><i>۱</i>,۰۹۴</div></div>
<div class="c n" style="left:808px;top:647px;width:86px;height:23px;background:#fee4a0;"><div class="i">۲۲۳,۰۶۸,۵۵۶</div></div>
<div class="c n" style="left:710px;top:647px;width:97px;height:23px;background:#d6e6f7;"><div class="i">۲۴۴,۰۳۷</div></div>
<div class="c n" style="left:657px;top:647px;width:52px;height:23px;background:#fee4a0;"><div class="i"><i>۱</i>۵,۰۴۳</div></div>
<div class="c n" style="left:602px;top:647px;width:54px;height:23px;background:#fee4a0;"><div class="i"><i>۱</i>۴,۶۷۷</div></div>
<div class="c n" style="left:516px;top:647px;width:85px;height:23px;background:#fee4a0;"><div class="i">۲۰۷,۳۲۸,۷۴۶</div></div>
<div class="c n" style="left:414px;top:647px;width:101px;height:23px;background:#fee4a0;"><div class="i">۳,۰۴۲,۹۶۴</div></div>
<div class="c n" style="left:360px;top:647px;width:53px;height:23px;background:#d6e6f7;"><div class="i"><i>۱</i>۹,۷۰۰</div></div>
<div class="c n" style="left:304px;top:647px;width:55px;height:23px;background:#d6e6f7;"><div class="i"><i>۱</i>۸,۶۵۹</div></div>
<div class="c n" style="left:219px;top:647px;width:84px;height:23px;background:#fee4a0;"><div class="i"><i>۱</i>۴۵,۵۲<i>۱</i>,۶۲۵</div></div>
<div class="c n" style="left:117px;top:647px;width:101px;height:23px;background:#d6e6f7;"><div class="i">۲,۷<i>۱</i>۵,۲۸۸</div></div>
<div class="c r" style="left:36px;top:647px;width:80px;height:23px;background:#d6e6f7;"><div class="i">تولید</div></div>
<div class="c r" style="left:1800px;top:671px;width:84px;height:40px;background:#fee4a0;"><div class="i">جمع فروش<br>صادراتی</div></div>
<div class="c r" style="left:1772px;top:671px;width:27px;height:40px;background:#fee4a0;"></div>
<div class="c n" style="left:1721px;top:671px;width:50px;height:40px;background:#fee4a0;"><div class="i"><i>۱</i>۷,<i>۱</i>۹۰</div></div>
<div class="c n" style="left:1665px;top:671px;width:55px;height:40px;background:#fee4a0;"><div class="i"><i>۱</i>۶,۹۲۵</div></div>
<div class="c n" style="left:1580px;top:671px;width:84px;height:40px;background:#fee4a0;"></div>
<div class="c n" style="left:1478px;top:671px;width:101px;height:40px;background:#fee4a0;"><div class="i">۴,۳۵۷,۷۰۹</div></div>
<div class="c n" style="left:1433px;top:671px;width:44px;height:40px;background:#fee4a0;"><div class="i">۰</div></div>
<div class="c n" style="left:1381px;top:671px;width:51px;height:40px;background:#fee4a0;"><div class="i">۰</div></div>
<div class="c n" style="left:1292px;top:671px;width:88px;height:40px;background:#fee4a0;"><div class="i">۰</div></div>
<div class="c n" style="left:1241px;top:671px;width:50px;height:40px;background:#fee4a0;"><div class="i"><i>۱</i>۷,<i>۱</i>۹۰</div></div>
<div class="c n" style="left:1185px;top:671px;width:55px;height:40px;background:#fee4a0;"><div class="i"><i>۱</i>۶,۹۲۵</div></div>
<div class="c n" style="left:1099px;top:671px;width:85px;height:40px;background:#fee4a0;"></div>
<div class="c n" style="left:997px;top:671px;width:101px;height:40px;background:#fee4a0;"><div class="i">۴,۳۵۷,۷۰۹</div></div>
<div class="c n" style="left:948px;top:671px;width:48px;height:40px;background:#fee4a0;"><div class="i"><i>۱</i>,۸۰۰</div></div>
<div class="c n" style="left:895px;top:671px;width:52px;height:40px;background:#fee4a0;"><div class="i"><i>۱</i>,۶۰۳</div></div>
<div class="c n" style="left:808px;top:671px;width:86px;height:40px;background:#fee4a0;"></div>
<div class="c n" style="left:710px;top:671px;width:97px;height:40px;background:#fee4a0;"><div class="i">۵۶۳,۷۴<i>۱</i></div></div>
<div class="c n" style="left:657px;top:671px;width:52px;height:40px;background:#fee4a0;"><div class="i"><i>۱</i>۸,۹۹۰</div></div>
<div class="c n" style="left:602px;top:671px;width:54px;height:40px;background:#fee4a0;"><div class="i"><i>۱</i>۸,۵۲۸</div></div>
<div class="c n" style="left:516px;top:671px;width:85px;height:40px;background:#fee4a0;"></div>
<div class="c n" style="left:414px;top:671px;width:101px;height:40px;background:#fee4a0;"><div class="i">۴,۹۲<i>۱</i>,۴۵۰</div></div>
<div class="c n" style="left:360px;top:671px;width:53px;height:40px;background:#fee4a0;"><div class="i">۲۳,۴۳۵</div></div>
<div class="c n" style="left:304px;top:671px;width:55px;height:40px;background:#fee4a0;"><div class="i">۲۲,<i>۱</i>۷<i>۱</i></div></div>
<div class="c n" style="left:219px;top:671px;width:84px;height:40px;background:#fee4a0;"></div>
<div class="c n" style="left:117px;top:671px;width:101px;height:40px;background:#fee4a0;"><div class="i">۳,۷۰۹,۵۲<i>۱</i></div></div>
<div class="c r" style="left:36px;top:671px;width:80px;height:40px;background:#fee4a0;"></div>
<div class="c sb" style="left:1800px;top:712px;width:84px;height:40px;background:#d5d5d5;"><div class="i">درآمد ارائه<br>خدمات:</div></div>
<div class="c " style="left:1772px;top:712px;width:27px;height:40px;background:#d5d5d5;"></div>
<div class="c " style="left:1721px;top:712px;width:50px;height:40px;background:#d5d5d5;"></div>
<div class="c " style="left:1665px;top:712px;width:55px;height:40px;background:#d5d5d5;"></div>
<div class="c " style="left:1580px;top:712px;width:84px;height:40px;background:#d5d5d5;"></div>
<div class="c " style="left:1478px;top:712px;width:101px;height:40px;background:#d5d5d5;"></div>
<div class="c " style="left:1433px;top:712px;width:44px;height:40px;background:#d5d5d5;"></div>
<div class="c " style="left:1381px;top:712px;width:51px;height:40px;background:#d5d5d5;"></div>
<div class="c " style="left:1292px;top:712px;width:88px;height:40px;background:#d5d5d5;"></div>
<div class="c " style="left:1241px;top:712px;width:50px;height:40px;background:#d5d5d5;"></div>
<div class="c " style="left:1185px;top:712px;width:55px;height:40px;background:#d5d5d5;"></div>
<div class="c " style="left:1099px;top:712px;width:85px;height:40px;background:#d5d5d5;"></div>
<div class="c " style="left:997px;top:712px;width:101px;height:40px;background:#d5d5d5;"></div>
<div class="c " style="left:948px;top:712px;width:48px;height:40px;background:#d5d5d5;"></div>
<div class="c " style="left:895px;top:712px;width:52px;height:40px;background:#d5d5d5;"></div>
<div class="c " style="left:808px;top:712px;width:86px;height:40px;background:#d5d5d5;"></div>
<div class="c " style="left:710px;top:712px;width:97px;height:40px;background:#d5d5d5;"></div>
<div class="c " style="left:657px;top:712px;width:52px;height:40px;background:#d5d5d5;"></div>
<div class="c " style="left:602px;top:712px;width:54px;height:40px;background:#d5d5d5;"></div>
<div class="c " style="left:516px;top:712px;width:85px;height:40px;background:#d5d5d5;"></div>
<div class="c " style="left:414px;top:712px;width:101px;height:40px;background:#d5d5d5;"></div>
<div class="c " style="left:360px;top:712px;width:53px;height:40px;background:#d5d5d5;"></div>
<div class="c " style="left:304px;top:712px;width:55px;height:40px;background:#d5d5d5;"></div>
<div class="c " style="left:219px;top:712px;width:84px;height:40px;background:#d5d5d5;"></div>
<div class="c " style="left:117px;top:712px;width:101px;height:40px;background:#d5d5d5;"></div>
<div class="c " style="left:36px;top:712px;width:80px;height:40px;background:#d5d5d5;"></div>
<div class="c r" style="left:1800px;top:753px;width:84px;height:23px;background:#d6e6f7;"><div class="i">سایر</div></div>
<div class="c r" style="left:1772px;top:753px;width:27px;height:23px;background:#d6e6f7;"><div class="i">تن</div></div>
<div class="c n" style="left:1721px;top:753px;width:50px;height:23px;background:#d6e6f7;"><div class="i">۷,۳۷۶</div></div>
<div class="c n" style="left:1665px;top:753px;width:55px;height:23px;background:#d6e6f7;"><div class="i">۷,۳۷۶</div></div>
<div class="c n" style="left:1580px;top:753px;width:84px;height:23px;background:#fee4a0;"><div class="i">۹۲,۶۴۰,۵۹<i>۱</i></div></div>
<div class="c n" style="left:1478px;top:753px;width:101px;height:23px;background:#d6e6f7;"><div class="i">۶۸۳,۳<i>۱</i>۷</div></div>
<div class="c n" style="left:1433px;top:753px;width:44px;height:23px;background:#d6e6f7;"><div class="i">۰</div></div>
<div class="c n" style="left:1381px;top:753px;width:51px;height:23px;background:#d6e6f7;"><div class="i">۰</div></div>
<div class="c n" style="left:1292px;top:753px;width:88px;height:23px;background:#d6e6f7;"><div class="i">۰</div></div>
<div class="c n" style="left:1241px;top:753px;width:50px;height:23px;background:#fee4a0;"><div class="i">۷,۳۷۶</div></div>
<div class="c n" style="left:1185px;top:753px;width:55px;height:23px;background:#fee4a0;"><div class="i">۷,۳۷۶</div></div>
<div class="c n" style="left:1099px;top:753px;width:85px;height:23px;background:#fee4a0;"><div class="i">۹۲,۶۴۰,۵۹<i>۱</i></div></div>
<div class="c n" style="left:997px;top:753px;width:101px;height:23px;background:#fee4a0;"><div class="i">۶۸۳,۳<i>۱</i>۷</div></div>
<div class="c n" style="left:948px;top:753px;width:48px;height:23px;background:#d6e6f7;"><div class="i"><i>۱</i>,۰۰۳</div></div>
<div class="c n" style="left:895px;top:753px;width:52px;height:23px;background:#d6e6f7;"><div class="i"><i>۱</i>,۰۰۳</div></div>
<div class="c n" style="left:808px;top:753px;width:86px;height:23px;background:#fee4a0;"><div class="i">۸۹,۲۸۸,<i>۱</i>۳۶</div></div>
<div class="c n" style="left:710px;top:753px;width:97px;height:23px;background:#d6e6f7;"><div class="i">۸۹,۵۵۶</div></div>
<div class="c n" style="left:657px;top:753px;width:52px;height:23px;background:#fee4a0;"><div class="i">۸,۳۷۹</div></div>
<div class="c n" style="left:602px;top:753px;width:54px;height:23px;background:#fee4a0;"><div class="i">۸,۳۷۹</div></div>
<div class="c n" style="left:516px;top:753px;width:85px;height:23px;background:#fee4a0;"><div class="i">۹۲,۲۳۹,۲۸۹</div></div>
<div class="c n" style="left:414px;top:753px;width:101px;height:23px;background:#fee4a0;"><div class="i">۷۷۲,۸۷۳</div></div>
<div class="c n" style="left:360px;top:753px;width:53px;height:23px;background:#d6e6f7;"><div class="i">۸,۹۳۶</div></div>
<div class="c n" style="left:304px;top:753px;width:55px;height:23px;background:#d6e6f7;"><div class="i">۸,۹۳۷</div></div>
<div class="c n" style="left:219px;top:753px;width:84px;height:23px;background:#fee4a0;"><div class="i">۷<i>۱</i>,۵۳۸,۶۶۰</div></div>
<div class="c n" style="left:117px;top:753px;width:101px;height:23px;background:#d6e6f7;"><div class="i">۶۳۹,۳۴<i>۱</i></div></div>
<div class="c r" style="left:36px;top:753px;width:80px;height:23px;background:#d6e6f7;"><div class="i">تولید</div></div>
<div class="c r" style="left:1800px;top:777px;width:84px;height:41px;background:#fee4a0;"><div class="i">جمع درآمد ارائه<br>خدمات</div></div>
<div class="c r" style="left:1772px;top:777px;width:27px;height:41px;background:#fee4a0;"></div>
<div class="c n" style="left:1721px;top:777px;width:50px;height:41px;background:#fee4a0;"><div class="i">۷,۳۷۶</div></div>
<div class="c n" style="left:1665px;top:777px;width:55px;height:41px;background:#fee4a0;"><div class="i">۷,۳۷۶</div></div>
<div class="c n" style="left:1580px;top:777px;width:84px;height:41px;background:#fee4a0;"></div>
<div class="c n" style="left:1478px;top:777px;width:101px;height:41px;background:#fee4a0;"><div class="i">۶۸۳,۳<i>۱</i>۷</div></div>
<div class="c n" style="left:1433px;top:777px;width:44px;height:41px;background:#fee4a0;"><div class="i">۰</div></div>
<div class="c n" style="left:1381px;top:777px;width:51px;height:41px;background:#fee4a0;"><div class="i">۰</div></div>
<div class="c n" style="left:1292px;top:777px;width:88px;height:41px;background:#fee4a0;"><div class="i">۰</div></div>
<div class="c n" style="left:1241px;top:777px;width:50px;height:41px;background:#fee4a0;"><div class="i">۷,۳۷۶</div></div>
<div class="c n" style="left:1185px;top:777px;width:55px;height:41px;background:#fee4a0;"><div class="i">۷,۳۷۶</div></div>
<div class="c n" style="left:1099px;top:777px;width:85px;height:41px;background:#fee4a0;"></div>
<div class="c n" style="left:997px;top:777px;width:101px;height:41px;background:#fee4a0;"><div class="i">۶۸۳,۳<i>۱</i>۷</div></div>
<div class="c n" style="left:948px;top:777px;width:48px;height:41px;background:#fee4a0;"><div class="i"><i>۱</i>,۰۰۳</div></div>
<div class="c n" style="left:895px;top:777px;width:52px;height:41px;background:#fee4a0;"><div class="i"><i>۱</i>,۰۰۳</div></div>
<div class="c n" style="left:808px;top:777px;width:86px;height:41px;background:#fee4a0;"></div>
<div class="c n" style="left:710px;top:777px;width:97px;height:41px;background:#fee4a0;"><div class="i">۸۹,۵۵۶</div></div>
<div class="c n" style="left:657px;top:777px;width:52px;height:41px;background:#fee4a0;"><div class="i">۸,۳۷۹</div></div>
<div class="c n" style="left:602px;top:777px;width:54px;height:41px;background:#fee4a0;"><div class="i">۸,۳۷۹</div></div>
<div class="c n" style="left:516px;top:777px;width:85px;height:41px;background:#fee4a0;"></div>
<div class="c n" style="left:414px;top:777px;width:101px;height:41px;background:#fee4a0;"><div class="i">۷۷۲,۸۷۳</div></div>
<div class="c n" style="left:360px;top:777px;width:53px;height:41px;background:#fee4a0;"><div class="i">۸,۹۳۶</div></div>
<div class="c n" style="left:304px;top:777px;width:55px;height:41px;background:#fee4a0;"><div class="i">۸,۹۳۷</div></div>
<div class="c n" style="left:219px;top:777px;width:84px;height:41px;background:#fee4a0;"></div>
<div class="c n" style="left:117px;top:777px;width:101px;height:41px;background:#fee4a0;"><div class="i">۶۳۹,۳۴<i>۱</i></div></div>
<div class="c r" style="left:36px;top:777px;width:80px;height:41px;background:#fee4a0;"></div>
<div class="c sb" style="left:1800px;top:819px;width:84px;height:40px;background:#d5d5d5;"><div class="i">برگشت از<br>فروش:</div></div>
<div class="c " style="left:1772px;top:819px;width:27px;height:40px;background:#d5d5d5;"></div>
<div class="c " style="left:1721px;top:819px;width:50px;height:40px;background:#d5d5d5;"></div>
<div class="c " style="left:1665px;top:819px;width:55px;height:40px;background:#d5d5d5;"></div>
<div class="c " style="left:1580px;top:819px;width:84px;height:40px;background:#d5d5d5;"></div>
<div class="c " style="left:1478px;top:819px;width:101px;height:40px;background:#d5d5d5;"></div>
<div class="c " style="left:1433px;top:819px;width:44px;height:40px;background:#d5d5d5;"></div>
<div class="c " style="left:1381px;top:819px;width:51px;height:40px;background:#d5d5d5;"></div>
<div class="c " style="left:1292px;top:819px;width:88px;height:40px;background:#d5d5d5;"></div>
<div class="c " style="left:1241px;top:819px;width:50px;height:40px;background:#d5d5d5;"></div>
<div class="c " style="left:1185px;top:819px;width:55px;height:40px;background:#d5d5d5;"></div>
<div class="c " style="left:1099px;top:819px;width:85px;height:40px;background:#d5d5d5;"></div>
<div class="c " style="left:997px;top:819px;width:101px;height:40px;background:#d5d5d5;"></div>
<div class="c " style="left:948px;top:819px;width:48px;height:40px;background:#d5d5d5;"></div>
<div class="c " style="left:895px;top:819px;width:52px;height:40px;background:#d5d5d5;"></div>
<div class="c " style="left:808px;top:819px;width:86px;height:40px;background:#d5d5d5;"></div>
<div class="c " style="left:710px;top:819px;width:97px;height:40px;background:#d5d5d5;"></div>
<div class="c " style="left:657px;top:819px;width:52px;height:40px;background:#d5d5d5;"></div>
<div class="c " style="left:602px;top:819px;width:54px;height:40px;background:#d5d5d5;"></div>
<div class="c " style="left:516px;top:819px;width:85px;height:40px;background:#d5d5d5;"></div>
<div class="c " style="left:414px;top:819px;width:101px;height:40px;background:#d5d5d5;"></div>
<div class="c " style="left:360px;top:819px;width:53px;height:40px;background:#d5d5d5;"></div>
<div class="c " style="left:304px;top:819px;width:55px;height:40px;background:#d5d5d5;"></div>
<div class="c " style="left:219px;top:819px;width:84px;height:40px;background:#d5d5d5;"></div>
<div class="c " style="left:117px;top:819px;width:101px;height:40px;background:#d5d5d5;"></div>
<div class="c " style="left:36px;top:819px;width:80px;height:40px;background:#d5d5d5;"></div>
<div class="c r" style="left:1800px;top:860px;width:84px;height:40px;background:#fee4a0;"><div class="i">جمع برگشت از<br>فروش</div></div>
<div class="c r" style="left:1772px;top:860px;width:27px;height:40px;background:#fee4a0;"></div>
<div class="c n" style="left:1721px;top:860px;width:50px;height:40px;background:#fee4a0;"></div>
<div class="c n" style="left:1665px;top:860px;width:55px;height:40px;background:#fee4a0;"><div class="i">۰</div></div>
<div class="c n" style="left:1580px;top:860px;width:84px;height:40px;background:#fee4a0;"></div>
<div class="c n" style="left:1478px;top:860px;width:101px;height:40px;background:#fee4a0;"><div class="i">۰</div></div>
<div class="c n" style="left:1433px;top:860px;width:44px;height:40px;background:#fee4a0;"></div>
<div class="c n" style="left:1381px;top:860px;width:51px;height:40px;background:#fee4a0;"><div class="i">۰</div></div>
<div class="c n" style="left:1292px;top:860px;width:88px;height:40px;background:#fee4a0;"><div class="i">۰</div></div>
<div class="c n" style="left:1241px;top:860px;width:50px;height:40px;background:#fee4a0;"></div>
<div class="c n" style="left:1185px;top:860px;width:55px;height:40px;background:#fee4a0;"><div class="i">۰</div></div>
<div class="c n" style="left:1099px;top:860px;width:85px;height:40px;background:#fee4a0;"></div>
<div class="c n" style="left:997px;top:860px;width:101px;height:40px;background:#fee4a0;"><div class="i">۰</div></div>
<div class="c n" style="left:948px;top:860px;width:48px;height:40px;background:#fee4a0;"></div>
<div class="c n" style="left:895px;top:860px;width:52px;height:40px;background:#fee4a0;"><div class="i">۰</div></div>
<div class="c n" style="left:808px;top:860px;width:86px;height:40px;background:#fee4a0;"></div>
<div class="c n" style="left:710px;top:860px;width:97px;height:40px;background:#fee4a0;"><div class="i">۰</div></div>
<div class="c n" style="left:657px;top:860px;width:52px;height:40px;background:#fee4a0;"></div>
<div class="c n" style="left:602px;top:860px;width:54px;height:40px;background:#fee4a0;"><div class="i">۰</div></div>
<div class="c n" style="left:516px;top:860px;width:85px;height:40px;background:#fee4a0;"></div>
<div class="c n" style="left:414px;top:860px;width:101px;height:40px;background:#fee4a0;"><div class="i">۰</div></div>
<div class="c n" style="left:360px;top:860px;width:53px;height:40px;background:#fee4a0;"></div>
<div class="c n" style="left:304px;top:860px;width:55px;height:40px;background:#fee4a0;"><div class="i">۰</div></div>
<div class="c n" style="left:219px;top:860px;width:84px;height:40px;background:#fee4a0;"></div>
<div class="c n" style="left:117px;top:860px;width:101px;height:40px;background:#fee4a0;"><div class="i">۰</div></div>
<div class="c r" style="left:36px;top:860px;width:80px;height:40px;background:#fee4a0;"></div>
<div class="c r" style="left:1800px;top:901px;width:84px;height:23px;background:#d6e6f7;"><div class="i">تخفیفات</div></div>
<div class="c r" style="left:1772px;top:901px;width:27px;height:23px;background:#d6e6f7;"></div>
<div class="c n" style="left:1721px;top:901px;width:50px;height:23px;background:#d5d5d5;"></div>
<div class="c n" style="left:1665px;top:901px;width:55px;height:23px;background:#d5d5d5;"></div>
<div class="c n" style="left:1580px;top:901px;width:84px;height:23px;background:#d5d5d5;"></div>
<div class="c n" style="left:1478px;top:901px;width:101px;height:23px;background:#d6e6f7;"><div class="i">۰</div></div>
<div class="c n" style="left:1433px;top:901px;width:44px;height:23px;background:#d5d5d5;"></div>
<div class="c n" style="left:1381px;top:901px;width:51px;height:23px;background:#d5d5d5;"></div>
<div class="c n" style="left:1292px;top:901px;width:88px;height:23px;background:#d6e6f7;"><div class="i">۰</div></div>
<div class="c n" style="left:1241px;top:901px;width:50px;height:23px;background:#d5d5d5;"></div>
<div class="c n" style="left:1185px;top:901px;width:55px;height:23px;background:#d5d5d5;"></div>
<div class="c n" style="left:1099px;top:901px;width:85px;height:23px;background:#d5d5d5;"></div>
<div class="c n neg" style="left:997px;top:901px;width:101px;height:23px;background:#d6e6f7;"><div class="i">(۲,۳۶۰,۳۲۲)</div></div>
<div class="c n" style="left:948px;top:901px;width:48px;height:23px;background:#d5d5d5;"></div>
<div class="c n" style="left:895px;top:901px;width:52px;height:23px;background:#d5d5d5;"></div>
<div class="c n" style="left:808px;top:901px;width:86px;height:23px;background:#d5d5d5;"></div>
<div class="c n neg" style="left:710px;top:901px;width:97px;height:23px;background:#d6e6f7;"><div class="i">(۵۰۳,۳۹<i>۱</i>)</div></div>
<div class="c n" style="left:657px;top:901px;width:52px;height:23px;background:#d5d5d5;"></div>
<div class="c n" style="left:602px;top:901px;width:54px;height:23px;background:#d5d5d5;"></div>
<div class="c n" style="left:516px;top:901px;width:85px;height:23px;background:#d5d5d5;"></div>
<div class="c n neg" style="left:414px;top:901px;width:101px;height:23px;background:#d6e6f7;"><div class="i">(۲,۸۶۳,۷<i>۱</i>۳)</div></div>
<div class="c n" style="left:360px;top:901px;width:53px;height:23px;background:#d5d5d5;"></div>
<div class="c n" style="left:304px;top:901px;width:55px;height:23px;background:#d5d5d5;"></div>
<div class="c n" style="left:219px;top:901px;width:84px;height:23px;background:#d5d5d5;"></div>
<div class="c n neg" style="left:117px;top:901px;width:101px;height:23px;background:#d6e6f7;"><div class="i">(<i>۱</i>,<i>۱</i>۹۹,۵۴۲)</div></div>
<div class="c r" style="left:36px;top:901px;width:80px;height:23px;background:#d6e6f7;"></div>
<div class="c r" style="left:1800px;top:925px;width:84px;height:23px;background:#fee4a0;"><div class="i">جمع</div></div>
<div class="c r" style="left:1772px;top:925px;width:27px;height:23px;background:#fee4a0;"></div>
<div class="c n" style="left:1721px;top:925px;width:50px;height:23px;background:#fee4a0;"></div>
<div class="c n" style="left:1665px;top:925px;width:55px;height:23px;background:#fee4a0;"></div>
<div class="c n" style="left:1580px;top:925px;width:84px;height:23px;background:#fee4a0;"></div>
<div class="c n" style="left:1478px;top:925px;width:101px;height:23px;background:#fee4a0;"><div class="i">۴۲,۶۸۰,۰۳۲</div></div>
<div class="c n" style="left:1433px;top:925px;width:44px;height:23px;background:#fee4a0;"></div>
<div class="c n" style="left:1381px;top:925px;width:51px;height:23px;background:#fee4a0;"></div>
<div class="c n" style="left:1292px;top:925px;width:88px;height:23px;background:#fee4a0;"><div class="i">۰</div></div>
<div class="c n" style="left:1241px;top:925px;width:50px;height:23px;background:#fee4a0;"></div>
<div class="c n" style="left:1185px;top:925px;width:55px;height:23px;background:#fee4a0;"></div>
<div class="c n" style="left:1099px;top:925px;width:85px;height:23px;background:#fee4a0;"></div>
<div class="c n" style="left:997px;top:925px;width:101px;height:23px;background:#fee4a0;"><div class="i">۴۰,۳<i>۱</i>۹,۷<i>۱</i>۰</div></div>
<div class="c n" style="left:948px;top:925px;width:48px;height:23px;background:#fee4a0;"></div>
<div class="c n" style="left:895px;top:925px;width:52px;height:23px;background:#fee4a0;"></div>
<div class="c n" style="left:808px;top:925px;width:86px;height:23px;background:#fee4a0;"></div>
<div class="c n" style="left:710px;top:925px;width:97px;height:23px;background:#fee4a0;"><div class="i">۵,۹۸۸,۴۲۰</div></div>
<div class="c n" style="left:657px;top:925px;width:52px;height:23px;background:#fee4a0;"></div>
<div class="c n" style="left:602px;top:925px;width:54px;height:23px;background:#fee4a0;"></div>
<div class="c n" style="left:516px;top:925px;width:85px;height:23px;background:#fee4a0;"></div>
<div class="c n" style="left:414px;top:925px;width:101px;height:23px;background:#fee4a0;"><div class="i">۴۶,۳۰۸,<i>۱</i>۳۰</div></div>
<div class="c n" style="left:360px;top:925px;width:53px;height:23px;background:#fee4a0;"></div>
<div class="c n" style="left:304px;top:925px;width:55px;height:23px;background:#fee4a0;"></div>
<div class="c n" style="left:219px;top:925px;width:84px;height:23px;background:#fee4a0;"></div>
<div class="c n" style="left:117px;top:925px;width:101px;height:23px;background:#fee4a0;"><div class="i">۲۹,۷۹۸,۳۰۷</div></div>
<div class="c r" style="left:36px;top:925px;width:80px;height:23px;background:#fee4a0;"></div>
</div>
<div class="tbl" id="raw">
<div class="bgl" style="left:35px;top:993px;width:1850px;height:48px;background:#6fd0f4"></div>
<div class="bgl" style="left:35px;top:1041px;width:1850px;height:49px;background:#b9b9b9"></div>
<div class="c h" style="left:1761px;top:994px;width:123px;height:46px;background:#0b98ca;"><div class="i">شرح</div></div>
<div class="c h" style="left:1731px;top:994px;width:29px;height:46px;background:#0b98ca;"><div class="i">واحد</div></div>
<div class="c h" style="left:1487px;top:994px;width:243px;height:22px;background:#0b98ca;"><div class="i">از ابتدای سال مالی تا تاریخ ۱۴۰۴/۰۶/۳۱</div></div>
<div class="c h" style="left:1228px;top:994px;width:258px;height:22px;background:#0b98ca;"><div class="i">اصلاحات</div></div>
<div class="c h" style="left:947px;top:994px;width:280px;height:22px;background:#0b98ca;"><div class="i">ازابتدای سال مالی تا تاریخ ۱۴۰۴/۰۶/۳۱ (اصلاح شده)</div></div>
<div class="c h" style="left:696px;top:994px;width:250px;height:22px;background:#0b98ca;"><div class="i">خرید دوره یک ماهه منتهی به ۱۴۰۴/۰۷/۳۰</div></div>
<div class="c h" style="left:303px;top:994px;width:392px;height:22px;background:#0b98ca;"><div class="i">مواد اولیه خریداری شده از ابتدای دوره تا پایان دوره منتهی به ۱۴۰۴/۰۷/۳۰</div></div>
<div class="c h" style="left:36px;top:994px;width:266px;height:22px;background:#0b98ca;"><div class="i">از ابتدای سال مالی تا تاریخ ۱۴۰۳/۰۷/۳۰</div></div>
<div class="c h" style="left:1681px;top:1017px;width:49px;height:23px;background:#0b98ca;"><div class="i">مقدار</div></div>
<div class="c h" style="left:1591px;top:1017px;width:89px;height:23px;background:#0b98ca;"><div class="i">نرخ (ریال)</div></div>
<div class="c h" style="left:1487px;top:1017px;width:103px;height:23px;background:#0b98ca;"><div class="i">مبلغ (میلیون ریال)</div></div>
<div class="c h" style="left:1452px;top:1017px;width:34px;height:23px;background:#0b98ca;"><div class="i">مقدار</div></div>
<div class="c h" style="left:1336px;top:1017px;width:115px;height:23px;background:#0b98ca;"><div class="i">نرخ (ریال)</div></div>
<div class="c h" style="left:1228px;top:1017px;width:107px;height:23px;background:#0b98ca;"><div class="i">مبلغ ( میلیون ریال)</div></div>
<div class="c h" style="left:1176px;top:1017px;width:51px;height:23px;background:#0b98ca;"><div class="i">مقدار</div></div>
<div class="c h" style="left:1056px;top:1017px;width:119px;height:23px;background:#0b98ca;"><div class="i">نرخ (ریال)</div></div>
<div class="c h" style="left:947px;top:1017px;width:108px;height:23px;background:#0b98ca;"><div class="i">مبلغ (میلیون ریال)</div></div>
<div class="c h" style="left:904px;top:1017px;width:42px;height:23px;background:#0b98ca;"><div class="i">مقدار</div></div>
<div class="c h" style="left:801px;top:1017px;width:102px;height:23px;background:#0b98ca;"><div class="i">نرخ (ریال)</div></div>
<div class="c h" style="left:696px;top:1017px;width:104px;height:23px;background:#0b98ca;"><div class="i">مبلغ (میلیون ریال)</div></div>
<div class="c h" style="left:626px;top:1017px;width:69px;height:23px;background:#0b98ca;"><div class="i">مقدار</div></div>
<div class="c h" style="left:456px;top:1017px;width:169px;height:23px;background:#0b98ca;"><div class="i">نرخ (ریال)</div></div>
<div class="c h" style="left:303px;top:1017px;width:152px;height:23px;background:#0b98ca;"><div class="i">مبلغ (میلیون ریال)</div></div>
<div class="c h" style="left:254px;top:1017px;width:48px;height:23px;background:#0b98ca;"><div class="i">مقدار</div></div>
<div class="c h" style="left:140px;top:1017px;width:113px;height:23px;background:#0b98ca;"><div class="i">نرخ (ریال)</div></div>
<div class="c h" style="left:36px;top:1017px;width:103px;height:23px;background:#0b98ca;"><div class="i">مبلغ (میلیون ریال)</div></div>
<div class="c sb" style="left:1761px;top:1041px;width:123px;height:23px;background:#d5d5d5;"><div class="i">مواد اولیه داخلی</div></div>
<div class="c " style="left:1731px;top:1041px;width:29px;height:23px;background:#d5d5d5;"></div>
<div class="c " style="left:1681px;top:1041px;width:49px;height:23px;background:#d5d5d5;"></div>
<div class="c " style="left:1591px;top:1041px;width:89px;height:23px;background:#d5d5d5;"></div>
<div class="c " style="left:1487px;top:1041px;width:103px;height:23px;background:#d5d5d5;"></div>
<div class="c " style="left:1452px;top:1041px;width:34px;height:23px;background:#d5d5d5;"></div>
<div class="c " style="left:1336px;top:1041px;width:115px;height:23px;background:#d5d5d5;"></div>
<div class="c " style="left:1228px;top:1041px;width:107px;height:23px;background:#d5d5d5;"></div>
<div class="c " style="left:1176px;top:1041px;width:51px;height:23px;background:#d5d5d5;"></div>
<div class="c " style="left:1056px;top:1041px;width:119px;height:23px;background:#d5d5d5;"></div>
<div class="c " style="left:947px;top:1041px;width:108px;height:23px;background:#d5d5d5;"></div>
<div class="c " style="left:904px;top:1041px;width:42px;height:23px;background:#d5d5d5;"></div>
<div class="c " style="left:801px;top:1041px;width:102px;height:23px;background:#d5d5d5;"></div>
<div class="c " style="left:696px;top:1041px;width:104px;height:23px;background:#d5d5d5;"></div>
<div class="c " style="left:626px;top:1041px;width:69px;height:23px;background:#d5d5d5;"></div>
<div class="c " style="left:456px;top:1041px;width:169px;height:23px;background:#d5d5d5;"></div>
<div class="c " style="left:303px;top:1041px;width:152px;height:23px;background:#d5d5d5;"></div>
<div class="c " style="left:254px;top:1041px;width:48px;height:23px;background:#d5d5d5;"></div>
<div class="c " style="left:140px;top:1041px;width:113px;height:23px;background:#d5d5d5;"></div>
<div class="c " style="left:36px;top:1041px;width:103px;height:23px;background:#d5d5d5;"></div>
<div class="c r" style="left:1761px;top:1065px;width:123px;height:24px;background:#d6e6f7;"><div class="i">مواد اولیه</div></div>
<div class="c r" style="left:1731px;top:1065px;width:29px;height:24px;background:#d6e6f7;"><div class="i">تن</div></div>
<div class="c n" style="left:1681px;top:1065px;width:49px;height:24px;background:#d6e6f7;"><div class="i">۴۸,۳۴۰</div></div>
<div class="c n" style="left:1591px;top:1065px;width:89px;height:24px;background:#fee4a0;"><div class="i">۳۵۷,۷۳۷,۸<i>۱</i>۵</div></div>
<div class="c n" style="left:1487px;top:1065px;width:103px;height:24px;background:#d6e6f7;"><div class="i"><i>۱</i>۷,۲۹۳,۰۴۶</div></div>
<div class="c n" style="left:1452px;top:1065px;width:34px;height:24px;background:#d6e6f7;"><div class="i">۰</div></div>
<div class="c n" style="left:1336px;top:1065px;width:115px;height:24px;background:#fee4a0;"><div class="i">۰</div></div>
<div class="c n" style="left:1228px;top:1065px;width:107px;height:24px;background:#d6e6f7;"><div class="i">۰</div></div>
<div class="c n" style="left:1176px;top:1065px;width:51px;height:24px;background:#fee4a0;"><div class="i">۴۸,۳۴۰</div></div>
<div class="c n" style="left:1056px;top:1065px;width:119px;height:24px;background:#fee4a0;"><div class="i">۳۵۷,۷۳۷,۸<i>۱</i>۵</div></div>
<div class="c n" style="left:947px;top:1065px;width:108px;height:24px;background:#fee4a0;"><div class="i"><i>۱</i>۷,۲۹۳,۰۴۶</div></div>
<div class="c n" style="left:904px;top:1065px;width:42px;height:24px;background:#d6e6f7;"><div class="i">۷,۷۳۲</div></div>
<div class="c n" style="left:801px;top:1065px;width:102px;height:24px;background:#fee4a0;"><div class="i">۴۲۲,۴۲۳,۴۳۵</div></div>
<div class="c n" style="left:696px;top:1065px;width:104px;height:24px;background:#d6e6f7;"><div class="i">۳,۲۶۶,<i>۱</i>۷۸</div></div>
<div class="c n" style="left:626px;top:1065px;width:69px;height:24px;background:#fee4a0;"><div class="i">۵۶,۰۷۲</div></div>
<div class="c n" style="left:456px;top:1065px;width:169px;height:24px;background:#fee4a0;"><div class="i">۳۶۶,۶۵۷,۵۸۳</div></div>
<div class="c n" style="left:303px;top:1065px;width:152px;height:24px;background:#fee4a0;"><div class="i">۲۰,۵۵۹,۲۲۴</div></div>
<div class="c n" style="left:254px;top:1065px;width:48px;height:24px;background:#d6e6f7;"><div class="i">۶۲,۸۰۷</div></div>
<div class="c n" style="left:140px;top:1065px;width:113px;height:24px;background:#fee4a0;"><div class="i">۲۳۵,۵۴۷,۸۲<i>۱</i></div></div>
<div class="c n" style="left:36px;top:1065px;width:103px;height:24px;background:#d6e6f7;"><div class="i"><i>۱</i>۴,۷۹۴,۰۵۲</div></div>
</div>
<div id="wm">@Codal360_ir</div>
</body></html>
